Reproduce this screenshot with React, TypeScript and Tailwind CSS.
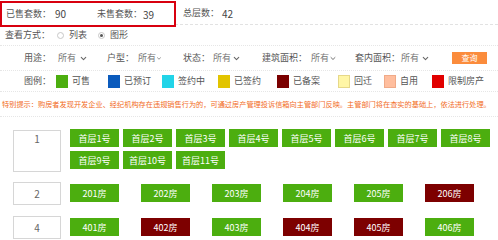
import React from "react";
import { ChevronDown } from "lucide-react";

type Room = { name: string; sold?: boolean };

const legend = [
  { label: "可售", color: "bg-[#4cae0f]" },
  { label: "已预订", color: "bg-[#0b5bbd]" },
  { label: "签约中", color: "bg-[#22d4e8]" },
  { label: "已签约", color: "bg-[#e2c400]" },
  { label: "已备案", color: "bg-[#7b0000]" },
  { label: "回迁", color: "bg-[#fff6a6] border border-[#e6d889]" },
  { label: "自用", color: "bg-[#ffbe9e] border border-[#f0aa88]" },
  { label: "限制房产", color: "bg-[#e10000]" },
];

const legendWidths = ["w-[52px]", "w-[54px]", "w-[56px]", "w-[59px]", "w-[61px]", "w-[46px]", "w-[48px]", "w-[60px]"];

const floor1: Room[] = Array.from({ length: 11 }, (_, i) => ({ name: `首层${i + 1}号` }));
const floor2: Room[] = [
  { name: "201房" },
  { name: "202房" },
  { name: "203房" },
  { name: "204房" },
  { name: "205房" },
  { name: "206房", sold: true },
];
const floor4: Room[] = [
  { name: "401房" },
  { name: "402房", sold: true },
  { name: "403房" },
  { name: "404房", sold: true },
  { name: "405房", sold: true },
  { name: "406房" },
];

const RoomButton = ({ room }: { room: Room }) => (
  <div
    className={`w-[49px] h-[18px] flex items-center justify-center text-[9px] text-white leading-none ${
      room.sold ? "bg-[#7d0000]" : "bg-[#4cae0f]"
    }`}
  >
    {room.name}
  </div>
);

const Select = ({ width }: { width: string }) => (
  <div className={`shrink-0 flex items-center justify-between h-[18px] px-[3px] ${width}`}>
    <span className="text-[#777]">所有</span>
    <ChevronDown size={9} strokeWidth={2.8} className="text-[#666]" />
  </div>
);

const Radio = ({ checked }: { checked?: boolean }) => (
  <span className="shrink-0 w-[7px] h-[7px] rounded-full border border-[#c8c8c8] flex items-center justify-center bg-white">
    {checked && <span className="w-[3px] h-[3px] rounded-full bg-[#555]" />}
  </span>
);

const Label = ({ width, children }: { width: string; children: React.ReactNode }) => (
  <span className={`shrink-0 ${width}`}>{children}</span>
);

export default function App() {
  return (
    <div
      className="w-[498px] h-[240px] bg-white overflow-hidden whitespace-nowrap text-[9px] text-[#555]"
      style={{ fontFamily: '"Noto Sans CJK SC", "Noto Sans", sans-serif' }}
    >
      {/* summary */}
      <div className="h-[25px] flex items-start border-b border-dashed border-[#e2e2e2]">
        <div className="mt-px h-[26px] w-[176px] shrink-0 border-2 border-[#d8000f] bg-white flex items-center pl-[4px]">
          <Label width="w-[49px]">已售套数：</Label>
          <Label width="w-[42px]">
            <span className="text-[10px] text-[#444]">90</span>
          </Label>
          <Label width="w-[46px]">未售套数：</Label>
          <span className="text-[10px] text-[#444]">39</span>
        </div>
        <div className="h-[26px] flex items-center ml-[7px]">
          <Label width="w-[39px]">总层数：</Label>
          <span className="text-[10px] text-[#444]">42</span>
        </div>
      </div>

      {/* view mode */}
      <div className="h-[21px] flex items-center pl-[5px] border-b border-dotted border-[#e6e6e6]">
        <Label width="w-[52px]">查看方式：</Label>
        <Radio />
        <span className="ml-[5px] w-[29px] shrink-0">列表</span>
        <Radio checked />
        <span className="ml-[5px]">图形</span>
      </div>

      {/* filters */}
      <div className="h-[25px] flex items-center pl-[24px] border-b border-dotted border-[#e6e6e6]">
        <Label width="w-[31px]">用途：</Label>
        <Select width="w-[36px]" />
        <Label width="ml-[16px] w-[28px]">户型：</Label>
        <Select width="w-[30px]" />
        <Label width="ml-[18px] w-[27px]">状态：</Label>
        <Select width="w-[34px]" />
        <Label width="ml-[18px] w-[46px]">建筑面积：</Label>
        <Select width="w-[32px]" />
        <Label width="ml-[15px] w-[43px]">套内面积：</Label>
        <Select width="w-[35px]" />
        <button className="shrink-0 ml-[19px] w-[35px] h-[12px] bg-[#fb8c3c] text-white text-[8px] leading-none flex items-center justify-center">
          查询
        </button>
      </div>

      {/* legend */}
      <div className="h-[21px] flex items-center pl-[24px] border-b border-dotted border-[#e6e6e6]">
        <Label width="w-[32px]">图例：</Label>
        {legend.map((item, i) => (
          <div key={item.label} className={`shrink-0 flex items-center ${legendWidths[i]}`}>
            <span className={`shrink-0 w-[12px] h-[13px] ${item.color}`} />
            <span className="ml-[4px]">{item.label}</span>
          </div>
        ))}
      </div>

      {/* notice */}
      <div className="h-[25px] flex items-center pl-[2px] border-b border-dotted border-[#e6e6e6] text-[7.2px] text-[#f26b1d]">
        特别提示：购房者发现开发企业、经纪机构存在违规销售行为的，可通过房产管理投诉信箱向主管部门反映。主管部门将在查实的基础上，依法进行处理。
      </div>

      {/* floors */}
      <div className="pt-[12px] flex flex-col gap-[10px]">
        <div className="flex items-start">
          <div className="shrink-0 ml-[13px] mt-px w-[48px] h-[42px] border border-[#d6d6d6] text-center text-[10px] text-[#666] pt-[1px] leading-[14px]">
            1
          </div>
          <div className="ml-[9px] w-[420px] flex flex-wrap gap-[4px]">
            {floor1.map((r) => (
              <RoomButton key={r.name} room={r} />
            ))}
          </div>
        </div>
        <div className="flex items-start">
          <div className="shrink-0 ml-[13px] w-[48px] h-[23px] border border-[#d6d6d6] flex items-center justify-center text-[10px] text-[#666]">
            2
          </div>
          <div className="ml-[9px] mt-[2px] flex gap-[22px]">
            {floor2.map((r) => (
              <RoomButton key={r.name} room={r} />
            ))}
          </div>
        </div>
        <div className="flex items-start mt-px">
          <div className="shrink-0 ml-[13px] w-[48px] h-[23px] border border-[#d6d6d6] flex items-center justify-center text-[10px] text-[#666]">
            4
          </div>
          <div className="ml-[9px] mt-[2px] flex gap-[22px]">
            {floor4.map((r) => (
              <RoomButton key={r.name} room={r} />
            ))}
          </div>
        </div>
      </div>
    </div>
  );
}
